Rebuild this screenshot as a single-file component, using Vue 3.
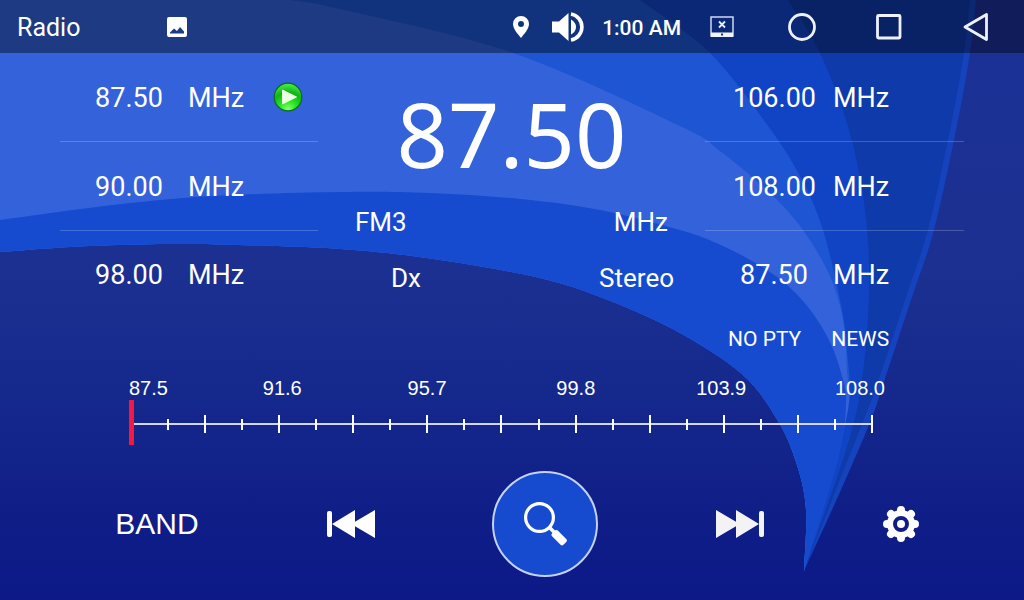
<script setup>
import { ref } from 'vue'

const leftPresets = [
  { freq: '87.50', playing: true },
  { freq: '90.00', playing: false },
  { freq: '98.00', playing: false }
]
const rightPresets = [{ freq: '106.00' }, { freq: '108.00' }, { freq: '87.50' }]
const scaleLabels = ['87.5', '91.6', '95.7', '99.8', '103.9', '108.0']
const ticks = Array.from({ length: 21 }, (_, i) => i)
const tuned = ref(87.5)

// Smooth curve through a list of points (Catmull-Rom to Bezier)
function curve(pts) {
  let d = ''
  for (let i = 0; i < pts.length - 1; i++) {
    const p0 = pts[i - 1] || pts[i]
    const p1 = pts[i]
    const p2 = pts[i + 1]
    const p3 = pts[i + 2] || p2
    const c1 = [p1[0] + (p2[0] - p0[0]) / 6, p1[1] + (p2[1] - p0[1]) / 6]
    const c2 = [p2[0] - (p3[0] - p1[0]) / 6, p2[1] - (p3[1] - p1[1]) / 6]
    d += ` C${c1.join(' ')} ${c2.join(' ')} ${p2.join(' ')}`
  }
  return d
}

const tip = [804, 571]
const floor = [tip, [806, 510], [797, 465], [778, 421], [743, 375], [680, 333], [608, 300], [540, 278], [440, 260], [340, 249], [190, 244], [90, 246], [0, 252]]
const underside = curve(floor)
const fan = [
  { color: '#1543be', edge: [[976, 0], [970, 53], [956, 130], [934, 230], [911, 300], [884, 382], [871, 420], [840, 492], tip] },
  { color: '#0f3aa9', edge: [[970, 0], [964, 53], [950, 130], [928, 230], [905, 300], [878, 382], [862, 424], [832, 500], tip] },
  { color: '#1144c5', edge: [[788, 0], [820, 53], [849, 130], [865, 210], [869, 290], [862, 380], [846, 450], tip] },
  { color: '#1d55d2', edge: [[640, 0], [710, 53], [771, 130], [802, 180], [823, 230], [840, 300], [847, 350], [846, 420], tip] },
  { color: '#3362da', edge: [[290, 0], [340, 9], [513, 53], [680, 126], [720, 151], [770, 193], [803, 230], [830, 276], [843, 320], [847, 370], [846, 420], tip] },
  { color: '#164bcf', edge: [[0, 220], [113, 205], [213, 196], [340, 192], [430, 193], [520, 199], [600, 210], [680, 230], [723, 246], [770, 272], [803, 301], [828, 338], [842, 376], [846, 405], [838, 460], tip] }
].map(({ color, edge }) => ({
  color,
  d: `M0 ${edge[0][1]} L${edge[0].join(' ')}${curve(edge)}${underside} Z`
}))
</script>

<template>
  <div class="radio">
    <svg class="wallpaper" viewBox="0 0 1024 600" preserveAspectRatio="none" aria-hidden="true">
      <path v-for="band in fan" :key="band.color" :d="band.d" :fill="band.color" />
    </svg>

    <header class="status">
      <h1 class="title">Radio</h1>
      <svg class="photo" width="20" height="20" viewBox="0 0 20 20" aria-hidden="true">
        <path fill="#fff" fill-rule="evenodd" d="M2 0h16a2 2 0 0 1 2 2v16a2 2 0 0 1-2 2H2a2 2 0 0 1-2-2V2a2 2 0 0 1 2-2ZM3 16.500h14v-2L13 10l-3 4-3-2.500-4 4Z" />
      </svg>
      <div class="system">
        <svg width="16" height="22" viewBox="0 0 16 22" aria-hidden="true">
          <path fill="#fff" fill-rule="evenodd" d="M8 0a8 8 0 0 1 8 8c0 5-5 10-8 14C5 18 0 13 0 8a8 8 0 0 1 8-8Zm0 5a3 3 0 1 0 0 6 3 3 0 0 0 0-6Z" />
        </svg>
        <svg width="32" height="30" viewBox="0 0 32 30" aria-hidden="true">
          <path fill="#fff" d="M0 9.500h7L16.500 1v28L7 20.500H0ZM19 7.500q5 3 5 7.500t-5 7.500Z" />
          <path fill="none" stroke="#fff" stroke-width="3.600" d="M19 2a13.200 13.200 0 0 1 0 26" />
        </svg>
        <time class="clock">1:00 AM</time>
      </div>
      <button class="screen" aria-label="Screen off">
        <svg width="24" height="22" viewBox="0 0 24 22" aria-hidden="true">
          <path fill="none" stroke="#cfd8ee" stroke-width="1.500" d="M1 1h22v19H1Z" />
          <path fill="none" stroke="#e6ebf8" stroke-width="1.800" d="m9 5.500 6 6M15 5.500l-6 6" />
          <path fill="#f0f3fc" d="M1 16.500h22V21H1Z" />
          <path fill="#14317c" d="M11 17.500h2v2h-2Z" />
        </svg>
      </button>
      <nav class="nav">
        <button aria-label="Home">
          <svg width="30" height="30" viewBox="0 0 30 30" aria-hidden="true"><circle cx="15" cy="15" r="12.500" fill="none" stroke="#eef1fc" stroke-width="2.800" /></svg>
        </button>
        <button aria-label="Recent apps">
          <svg width="30" height="30" viewBox="0 0 30 30" aria-hidden="true"><rect x="3.500" y="3.500" width="22.500" height="22.500" rx="1" fill="none" stroke="#eef1fc" stroke-width="2.800" /></svg>
        </button>
        <button aria-label="Back">
          <svg width="30" height="30" viewBox="0 0 30 30" aria-hidden="true"><path fill="none" stroke="#eef1fc" stroke-width="2.800" stroke-linejoin="round" d="M4 15 25.500 2.500v25Z" /></svg>
        </button>
      </nav>
    </header>

    <main class="body">
      <section class="tuner">
        <ul class="presets">
          <li v-for="p in leftPresets" :key="p.freq">
            <button class="preset">
              <span class="freq">{{ p.freq }}</span>
              <span class="unit">MHz</span>
              <svg v-if="p.playing" width="30" height="30" viewBox="0 0 30 30" aria-hidden="true">
                <defs>
                  <radialGradient id="orb" cx=".5" cy=".95" r=".95">
                    <stop offset="0" stop-color="#8dff6c" />
                    <stop offset=".3" stop-color="#2bea22" />
                    <stop offset=".65" stop-color="#10b512" />
                    <stop offset="1" stop-color="#4ff04a" />
                  </radialGradient>
                </defs>
                <circle cx="15" cy="15" r="13.800" fill="url(#orb)" stroke="#0c6a2c" stroke-width="1.200" />
                <path fill="#eaffe4" stroke="#eaffe4" stroke-linejoin="round" d="M9.500 8v14L23.500 15Z" />
              </svg>
            </button>
          </li>
        </ul>

        <div class="now">
          <output class="big">87.50</output>
          <div class="facts band-row"><span>FM3</span><span>MHz</span></div>
          <div class="facts mode-row"><span>Dx</span><span>Stereo</span></div>
        </div>

        <div class="side">
          <ul class="presets">
            <li v-for="p in rightPresets" :key="p.freq">
              <button class="preset">
                <span class="freq">{{ p.freq }}</span>
                <span class="unit">MHz</span>
              </button>
            </li>
          </ul>
          <div class="rds">
            <button>NO PTY</button>
            <button>NEWS</button>
          </div>
        </div>
      </section>

      <section class="dial">
        <div class="labels">
          <span v-for="l in scaleLabels" :key="l">{{ l }}</span>
        </div>
        <div class="ruler">
          <div class="ticks">
            <i v-for="t in ticks" :key="t" :class="{ major: t % 2 === 0 }"></i>
          </div>
          <input v-model="tuned" class="needle" type="range" min="87.5" max="108" step="0.05" aria-label="Frequency" />
        </div>
      </section>

      <section class="controls">
        <button class="band">BAND</button>
        <button aria-label="Previous station">
          <svg width="48" height="30" viewBox="0 0 48 30" aria-hidden="true">
            <g fill="#fff"><rect y="2" width="5" height="26" rx="2" /><path d="M5 15 28 1v11.800L48 1v28L28 17.200V29Z" /></g>
          </svg>
        </button>
        <button class="search" aria-label="Search stations">
          <svg width="44" height="44" viewBox="523 502 44 44" aria-hidden="true">
            <circle cx="539.500" cy="517.500" r="13.900" fill="none" stroke="#fff" stroke-width="3.200" />
            <path fill="none" stroke="#fff" stroke-width="3.600" d="m549 527 6 6" />
            <rect x="0" y="-4" width="16" height="8" rx="2" fill="#fff" transform="translate(553.500 532) rotate(45)" />
          </svg>
        </button>
        <button aria-label="Next station">
          <svg width="48" height="30" viewBox="0 0 48 30" aria-hidden="true">
            <g fill="#f3f3f5"><rect x="43" y="2" width="5" height="26" rx="2" /><path d="M43 15 20 1v11.800L0 1v28l20-11.800V29Z" /></g>
          </svg>
        </button>
        <button aria-label="Settings">
          <svg width="38" height="38" viewBox="-19 -19 38 38" aria-hidden="true">
            <g fill="none" stroke="#fff">
              <circle r="11" stroke-width="6" />
              <path stroke-width="8" stroke-linecap="round" d="M0-12v-2M0 12v2M-12 0h-2M12 0h2M9-9l1-1M-9-9l-1-1M9 9l1 1M-9 9l-1 1" />
            </g>
            <circle r="4" fill="#fff" />
          </svg>
        </button>
      </section>
    </main>
  </div>
</template>

<style>
html, body { margin: 0; }
</style>

<style scoped>
.radio {
  position: relative;
  min-height: 100vh;
  display: flex;
  flex-direction: column;
  overflow: hidden;
  background: linear-gradient(#1b3196 0%, #1b3090 45%, #172c8e 58%, #0f1d87 88%, #0c1987 100%);
  color: #fff;
  font-family: Roboto, "Liberation Sans", sans-serif;
}
.wallpaper {
  position: absolute;
  inset: 0;
  width: 100%;
  height: 100%;
}
button {
  margin: 0;
  padding: 0;
  border: 0;
  background: none;
  color: inherit;
  font: inherit;
  cursor: pointer;
}
svg { display: block; flex: none; }

.status {
  position: relative;
  display: flex;
  align-items: center;
  height: 53px;
  padding: 0 5px 0 17px;
  background: rgba(0, 0, 0, 0.4);
}
.title {
  width: 150px;
  margin: 0;
  padding-top: 2px;
  font-size: 25px;
  font-weight: 400;
  line-height: 32px;
}
.system {
  display: flex;
  align-items: center;
  gap: 18px;
  margin-left: auto;
}
.system svg + svg { margin-left: 5px; }
.clock {
  padding-top: 2px;
  font-size: 21px;
  font-weight: 500;
  line-height: 28px;
}
.screen { margin-left: 29px; }
.nav {
  display: flex;
  margin-left: 24px;
}
.nav button {
  display: flex;
  justify-content: center;
  width: 87px;
}

.body {
  position: relative;
  flex: 1;
  display: flex;
  flex-direction: column;
  padding: 0 60px 23px;
}
.tuner {
  display: grid;
  grid-template-columns: 258fr 387fr 259fr;
}
.presets {
  margin: 0;
  padding: 0;
  list-style: none;
}
.preset {
  display: flex;
  align-items: center;
  gap: 18px;
  width: 100%;
  height: 89px;
  padding-left: 28px;
  border-bottom: 1px solid rgba(255, 255, 255, 0.2);
  font-size: 27px;
  line-height: 32px;
}
.preset span { padding-top: 2px; }
.presets li:last-child .preset {
  height: 86px;
  border-bottom: 0;
}
.freq { width: 82px; text-align: center; }
.unit { width: 67px; text-align: left; }
.now {
  display: flex;
  flex-direction: column;
}
.big {
  height: 141px;
  padding-top: 20px;
  box-sizing: border-box;
  font-family: "Noto Sans", "Open Sans", sans-serif;
  font-size: 90px;
  line-height: 120px;
  text-align: center;
}
.facts {
  display: flex;
  justify-content: space-between;
  font-size: 26px;
  line-height: 56px;
}
.band-row { padding: 0 37px; }
.mode-row { padding: 0 31px 0 73px; }
.rds {
  display: flex;
  gap: 30px;
  padding: 8px 0 0 23px;
  font-size: 21px;
  line-height: 28px;
}

.dial { padding: 23px 79px 0 69px; }
.labels {
  display: grid;
  grid-template-columns: 134fr 145fr 149fr 140fr 139fr 49fr;
  font-family: "Liberation Sans", Arial, sans-serif;
  font-size: 20px;
  line-height: 24px;
}
.ruler {
  position: relative;
  height: 45px;
  margin-right: 12px;
}
.ticks {
  display: flex;
  align-items: center;
  justify-content: space-between;
  height: 48px;
  margin-left: 1px;
  background: linear-gradient(#d3d6ee, #d3d6ee) center / 100% 2px no-repeat;
}
.ticks i {
  width: 2px;
  height: 11px;
  background: #fff;
}
.ticks .major { height: 18px; }
.needle {
  position: absolute;
  inset: 0;
  width: 100%;
  height: 45px;
  margin: 0;
  appearance: none;
  background: none;
}
.needle::-webkit-slider-thumb {
  appearance: none;
  width: 5px;
  height: 45px;
  border: 0;
  border-radius: 0;
  background: #f5193f;
}

.controls {
  display: grid;
  grid-template-columns: 194fr 194fr 194fr 195fr 127fr;
  align-items: center;
  justify-items: center;
  margin-top: auto;
}
.band {
  font-family: "Liberation Sans", Arial, sans-serif;
  font-size: 30px;
  line-height: 40px;
}
.search {
  display: flex;
  align-items: center;
  justify-content: center;
  width: 106px;
  height: 106px;
  border: 2px solid #c6d2f5;
  border-radius: 50%;
  background: #164bcf;
}
</style>
